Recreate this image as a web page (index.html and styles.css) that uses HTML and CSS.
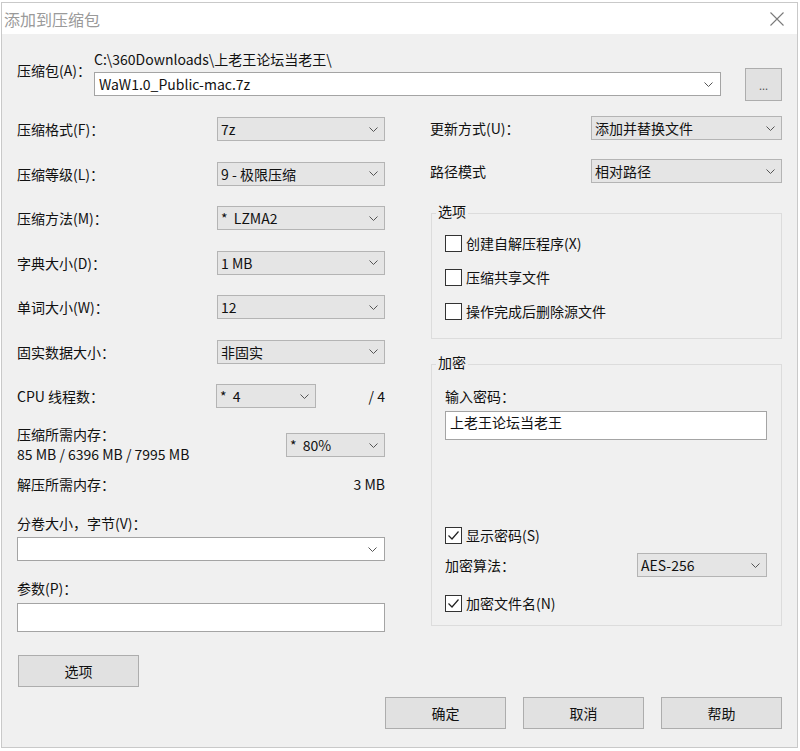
FILE: index.html
```html
<!DOCTYPE html>
<html>
    <head>
        <meta charset="utf-8">
        <title>添加到压缩包</title>
        <link rel="stylesheet" href="styles.css">
    </head>
    <body>
        <div class="window">
            <div class="titlebar">
                <span class="title">添加到压缩包</span>
                <svg class="close" width="14" height="14" viewBox="0 0 14 14"><path d="M0.5 0.5 L13.5 13.5 M13.5 0.5 L0.5 13.5" stroke="#7a7a7a" stroke-width="1.1" fill="none"/></svg>
            </div>

            <div class="content">
                <!-- archive path -->
                <div class="archive">
                    <div class="archive-label">压缩包(A)：</div>
                    <div class="archive-main">
                        <div class="path">C:\360Downloads\上老王论坛当老王\</div>
                        <div class="combo">
                            <span>WaW1.0_Public-mac.7z</span>
                            <svg class="chev" width="9" height="5" viewBox="0 0 9 5"><polyline points="0.5,0.5 4.5,4.5 8.5,0.5" fill="none" stroke="#555" stroke-width="1"/></svg>
                        </div>
                    </div>
                    <div class="btn browse">...</div>
                </div>

                <div class="columns">
                    <!-- left side -->
                    <div class="left">
                        <div class="frow first">
                            <span>压缩格式(F)：</span>
                            <div class="select wide"><span>7z</span><svg class="chev" width="9" height="5" viewBox="0 0 9 5"><polyline points="0.5,0.5 4.5,4.5 8.5,0.5" fill="none" stroke="#555" stroke-width="1"/></svg></div>
                        </div>
                        <div class="frow">
                            <span>压缩等级(L)：</span>
                            <div class="select wide"><span>9 - 极限压缩</span><svg class="chev" width="9" height="5" viewBox="0 0 9 5"><polyline points="0.5,0.5 4.5,4.5 8.5,0.5" fill="none" stroke="#555" stroke-width="1"/></svg></div>
                        </div>
                        <div class="frow">
                            <span>压缩方法(M)：</span>
                            <div class="select wide"><span>*&nbsp; LZMA2</span><svg class="chev" width="9" height="5" viewBox="0 0 9 5"><polyline points="0.5,0.5 4.5,4.5 8.5,0.5" fill="none" stroke="#555" stroke-width="1"/></svg></div>
                        </div>
                        <div class="frow">
                            <span>字典大小(D)：</span>
                            <div class="select wide"><span>1 MB</span><svg class="chev" width="9" height="5" viewBox="0 0 9 5"><polyline points="0.5,0.5 4.5,4.5 8.5,0.5" fill="none" stroke="#555" stroke-width="1"/></svg></div>
                        </div>
                        <div class="frow">
                            <span>单词大小(W)：</span>
                            <div class="select wide"><span>12</span><svg class="chev" width="9" height="5" viewBox="0 0 9 5"><polyline points="0.5,0.5 4.5,4.5 8.5,0.5" fill="none" stroke="#555" stroke-width="1"/></svg></div>
                        </div>
                        <div class="frow">
                            <span>固实数据大小：</span>
                            <div class="select wide"><span>非固实</span><svg class="chev" width="9" height="5" viewBox="0 0 9 5"><polyline points="0.5,0.5 4.5,4.5 8.5,0.5" fill="none" stroke="#555" stroke-width="1"/></svg></div>
                        </div>
                        <div class="frow">
                            <span class="cpu-label">CPU 线程数：</span>
                            <div class="select narrow"><span>*&nbsp; 4</span><svg class="chev" width="9" height="5" viewBox="0 0 9 5"><polyline points="0.5,0.5 4.5,4.5 8.5,0.5" fill="none" stroke="#555" stroke-width="1"/></svg></div>
                            <span class="push">/ 4</span>
                        </div>

                        <div class="mem">
                            <div>
                                <div>压缩所需内存：</div>
                                <div>85 MB / 6396 MB / 7995 MB</div>
                            </div>
                            <div class="select mem-sel"><span>*&nbsp; 80%</span><svg class="chev" width="9" height="5" viewBox="0 0 9 5"><polyline points="0.5,0.5 4.5,4.5 8.5,0.5" fill="none" stroke="#555" stroke-width="1"/></svg></div>
                        </div>
                        <div class="unpack">
                            <span>解压所需内存：</span>
                            <span>3 MB</span>
                        </div>

                        <div class="vol-label">分卷大小，字节(V)：</div>
                        <div class="combo vol">
                            <span></span>
                            <svg class="chev" width="9" height="5" viewBox="0 0 9 5"><polyline points="0.5,0.5 4.5,4.5 8.5,0.5" fill="none" stroke="#555" stroke-width="1"/></svg>
                        </div>
                        <div class="param-label">参数(P)：</div>
                        <div class="textbox param"></div>

                        <div class="btn opts-btn">选项</div>
                    </div>

                    <!-- right side -->
                    <div class="right">
                        <div class="rrow">
                            <span>更新方式(U)：</span>
                            <div class="select rsel"><span>添加并替换文件</span><svg class="chev" width="9" height="5" viewBox="0 0 9 5"><polyline points="0.5,0.5 4.5,4.5 8.5,0.5" fill="none" stroke="#555" stroke-width="1"/></svg></div>
                        </div>
                        <div class="rrow second">
                            <span>路径模式</span>
                            <div class="select rsel"><span>相对路径</span><svg class="chev" width="9" height="5" viewBox="0 0 9 5"><polyline points="0.5,0.5 4.5,4.5 8.5,0.5" fill="none" stroke="#555" stroke-width="1"/></svg></div>
                        </div>

                        <fieldset class="group options">
                            <legend>选项</legend>
                            <div class="check"><span class="box"></span>创建自解压程序(X)</div>
                            <div class="check gap"><span class="box"></span>压缩共享文件</div>
                            <div class="check gap"><span class="box"></span>操作完成后删除源文件</div>
                        </fieldset>

                        <fieldset class="group crypt">
                            <legend>加密</legend>
                            <div class="pw-label">输入密码：</div>
                            <div class="textbox pw">上老王论坛当老王</div>
                            <div class="check show-pw"><span class="box"><svg width="15" height="15" viewBox="0 0 15 15"><polyline points="2.5,7.5 6,11 12.5,3.5" fill="none" stroke="#222" stroke-width="1.2"/></svg></span>显示密码(S)</div>
                            <div class="algo">
                                <span>加密算法：</span>
                                <div class="select algo-sel"><span>AES-256</span><svg class="chev" width="9" height="5" viewBox="0 0 9 5"><polyline points="0.5,0.5 4.5,4.5 8.5,0.5" fill="none" stroke="#555" stroke-width="1"/></svg></div>
                            </div>
                            <div class="check enc-names"><span class="box"><svg width="15" height="15" viewBox="0 0 15 15"><polyline points="2.5,7.5 6,11 12.5,3.5" fill="none" stroke="#222" stroke-width="1.2"/></svg></span>加密文件名(N)</div>
                        </fieldset>
                    </div>
                </div>

                <div class="footer">
                    <div class="btn action">确定</div>
                    <div class="btn action">取消</div>
                    <div class="btn action">帮助</div>
                </div>
            </div>
        </div>
    </body>
</html>
```

FILE: styles.css
```css
* {
    box-sizing: border-box;
}

body {
    margin: 0;
    background-color: #ffffff;
    font-family: "Noto Sans CJK SC", "Liberation Sans", sans-serif;
    font-size: 14px;
    color: #111;
    line-height: 20px;
}

.window {
    width: 797px;
    height: 746px;
    margin: 2px 0 0 1px;
    border: 1px solid #c9c9c9;
    background-color: #f0f0f0;
    display: flex;
    flex-direction: column;
}

    /*title bar*/

.titlebar {
    height: 31px;
    background-color: #fff;
    display: flex;
    align-items: center;
    justify-content: space-between;
    padding: 0 13px 0 2px;
}

.title {
    font-size: 16px;
    color: #9a9a9a;
}

.content {
    flex: 1;
    padding: 15px 15px 0 15px;
}

    /*archive row*/

.archive {
    display: flex;
    align-items: flex-start;
}

.archive-label {
    width: 77px;
    margin-top: 11px;
}

.archive-main {
    width: 627px;
}

.combo {
    height: 24px;
    margin-top: 3px;
    background-color: #fff;
    border: 1px solid #a4a4a4;
    display: flex;
    align-items: center;
    justify-content: space-between;
    padding: 0 7px 0 4px;
}

.btn {
    background-color: #e1e1e1;
    border: 1px solid #adadad;
    display: flex;
    align-items: center;
    justify-content: center;
}

.browse {
    width: 37px;
    height: 33px;
    margin-left: 24px;
    margin-top: 19px;
    font-size: 11px;
    color: #555;
}

    /*columns*/

.columns {
    display: flex;
    gap: 45px;
    margin-top: 15px;
}

.left {
    width: 368px;
}

.right {
    width: 352px;
}

.select {
    height: 24px;
    background-color: #e5e5e5;
    border: 1px solid #b4b4b4;
    display: flex;
    align-items: center;
    justify-content: space-between;
    padding: 0 6px 0 3px;
}

.frow {
    display: flex;
    align-items: center;
    height: 24px;
    margin-bottom: 20.5px;
}

.frow.first {
    margin-top: 1px;
}

.wide {
    width: 168px;
    margin-left: auto;
}

.cpu-label {
    width: 199px;
}

.narrow {
    width: 100px;
}

.push {
    margin-left: auto;
}

.mem {
    display: flex;
    justify-content: space-between;
    align-items: flex-start;
    margin-top: -4.5px;
}

.mem-sel {
    width: 99px;
    margin-top: 9px;
}

.unpack {
    display: flex;
    justify-content: space-between;
    margin-top: 10px;
}

.vol-label {
    margin-top: 19px;
}

.combo.vol {
    margin-top: 4px;
}

.param-label {
    margin-top: 17px;
}

.textbox {
    height: 29px;
    background-color: #fff;
    border: 1px solid #a4a4a4;
    padding: 0 4px;
}

.param {
    margin-top: 5px;
}

.opts-btn {
    width: 121px;
    height: 32px;
    margin: 23px 0 0 1px;
}

    /*right side*/

.rrow {
    display: flex;
    align-items: center;
    height: 24px;
}

.rrow.second {
    margin-top: 19px;
}

.rsel {
    width: 191px;
    margin-left: auto;
}

.group {
    margin: 18px 0 0 1px;
    border: 1px solid #dcdcdc;
    min-width: 0;
}

.group legend {
    padding: 0 2px 4px 2px;
    margin-left: -9px;
    line-height: 20px;
}

.options {
    padding: 6px 14px 15px 13px;
}

.check {
    display: flex;
    align-items: center;
    gap: 4px;
    height: 24px;
}

.check.gap {
    margin-top: 10px;
}

.box {
    width: 17px;
    height: 17px;
    border: 1px solid #333;
    background-color: #fff;
    display: flex;
    align-items: center;
    justify-content: center;
}

.crypt {
    margin-top: 13px;
    padding: 10px 14px 10px 13px;
}

.pw {
    margin-top: 5px;
}

.show-pw {
    margin-top: 83px;
}

.algo {
    display: flex;
    align-items: center;
    height: 24px;
    margin-top: 6px;
}

.algo-sel {
    width: 130px;
    margin-left: auto;
}

.enc-names {
    margin-top: 14px;
}

    /*bottom buttons*/

.footer {
    display: flex;
    justify-content: flex-end;
    gap: 17px;
    margin-top: 10px;
}

.action {
    width: 121px;
    height: 32px;
}
```
